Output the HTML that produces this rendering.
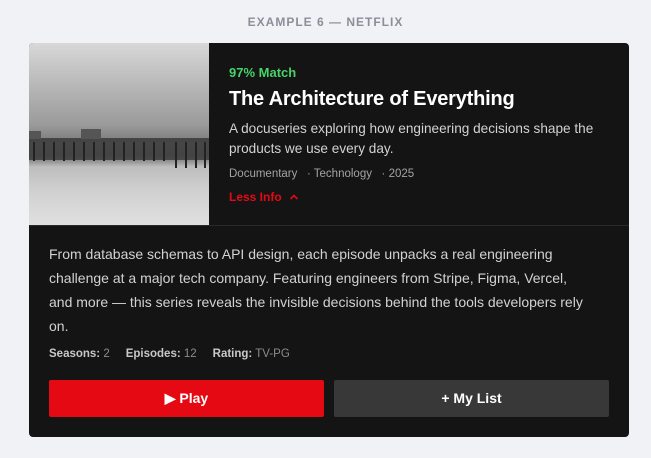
<!DOCTYPE html>
<html><head><style>
*{margin:0;padding:0;box-sizing:border-box}
body{width:651px;height:458px;background:#f1f2f5;font-family:"Liberation Sans",sans-serif;position:relative;overflow:hidden}
.lbl{position:absolute;top:15px;left:0;width:651px;text-align:center;font-size:12px;font-weight:bold;letter-spacing:1px;color:#8a8f99}
.card{position:absolute;left:29px;top:43px;width:600px;height:394px;background:#141414;border-radius:4px;overflow:hidden}
.img{position:absolute;left:0;top:0;width:180px;height:182px;background:linear-gradient(#d8d8d8 0%,#9a9a9a 45%,#7a7a7a 55%,#6a6a6a 62%,#bdbdbd 68%,#cfcfcf 80%,#e0e0e0 100%)}
.top{position:absolute;left:200px;top:0}
.m{position:absolute;top:22px;font-size:13px;font-weight:bold;color:#46d369;white-space:nowrap}
.t{position:absolute;top:45px;font-size:20px;font-weight:bold;color:#fff;white-space:nowrap;letter-spacing:-0.2px}
.d{position:absolute;top:76px;width:390px;font-size:13.6px;line-height:20px;color:#d2d2d2}
.g{position:absolute;top:125px;font-size:11.5px;color:#a3a3a3;white-space:nowrap}
.li{position:absolute;top:147px;font-size:12px;font-weight:bold;color:#e50914;white-space:nowrap}
.hr{position:absolute;left:0;top:182px;width:600px;height:1px;background:#2a2a2a}
.desc{position:absolute;left:20px;top:199px;width:545px;font-size:14px;line-height:24px;color:#d2d2d2}
.meta{position:absolute;left:20px;top:305px;font-size:11.5px;color:#8c8c8c;white-space:nowrap}
.meta b{color:#c8c8c8}
.btn{position:absolute;top:337px;width:275px;height:37px;border-radius:2px;color:#fff;font-weight:bold;font-size:14px;text-align:center;line-height:37px}
</style></head><body>
<div class="lbl">EXAMPLE 6 — NETFLIX</div>
<div class="card">
<div class="img">
<svg width="180" height="182" style="position:absolute;left:0;top:0">
<rect x="0" y="95" width="180" height="4" fill="#444"/>
<rect x="0" y="99" width="180" height="18" fill="#3a3a3a" opacity=".8"/>
<g stroke="#222" stroke-width="2">
<line x1="5" y1="99" x2="5" y2="118"/><line x1="15" y1="99" x2="15" y2="118"/><line x1="25" y1="99" x2="25" y2="118"/><line x1="35" y1="99" x2="35" y2="118"/><line x1="45" y1="99" x2="45" y2="118"/><line x1="55" y1="99" x2="55" y2="118"/><line x1="65" y1="99" x2="65" y2="118"/><line x1="75" y1="99" x2="75" y2="118"/><line x1="85" y1="99" x2="85" y2="118"/><line x1="95" y1="99" x2="95" y2="118"/><line x1="105" y1="99" x2="105" y2="118"/><line x1="115" y1="99" x2="115" y2="118"/><line x1="125" y1="99" x2="125" y2="118"/><line x1="135" y1="99" x2="135" y2="118"/><line x1="147" y1="99" x2="147" y2="125"/><line x1="157" y1="99" x2="157" y2="125"/><line x1="167" y1="99" x2="167" y2="125"/><line x1="176" y1="99" x2="176" y2="125"/>
</g>
<rect x="52" y="86" width="20" height="10" fill="#555"/><rect x="0" y="88" width="12" height="8" fill="#555"/>
</svg>
</div>
<div class="top">
<div class="m">97% Match</div>
<div class="t">The Architecture of Everything</div>
<div class="d">A docuseries exploring how engineering decisions shape the products we use every day.</div>
<div class="g">Documentary &nbsp;&nbsp;· Technology &nbsp;&nbsp;· 2025</div>
<div class="li">Less Info <svg width="10" height="8" style="margin-left:4px" viewBox="0 0 10 8"><path d="M1.5 6 L5 2.5 L8.5 6" stroke="#e50914" stroke-width="1.6" fill="none"/></svg></div>
</div>
<div class="hr"></div>
<div class="desc">From database schemas to API design, each episode unpacks a real engineering challenge at a major tech company. Featuring engineers from Stripe, Figma, Vercel, and more — this series reveals the invisible decisions behind the tools developers rely on.</div>
<div class="meta"><b>Seasons:</b> 2 &nbsp;&nbsp;&nbsp;&nbsp;<b>Episodes:</b> 12 &nbsp;&nbsp;&nbsp;&nbsp;<b>Rating:</b> TV-PG</div>
<div class="btn" style="left:20px;background:#e50914">▶ Play</div>
<div class="btn" style="left:305px;background:#383838">+ My List</div>
</div>
</body></html>
